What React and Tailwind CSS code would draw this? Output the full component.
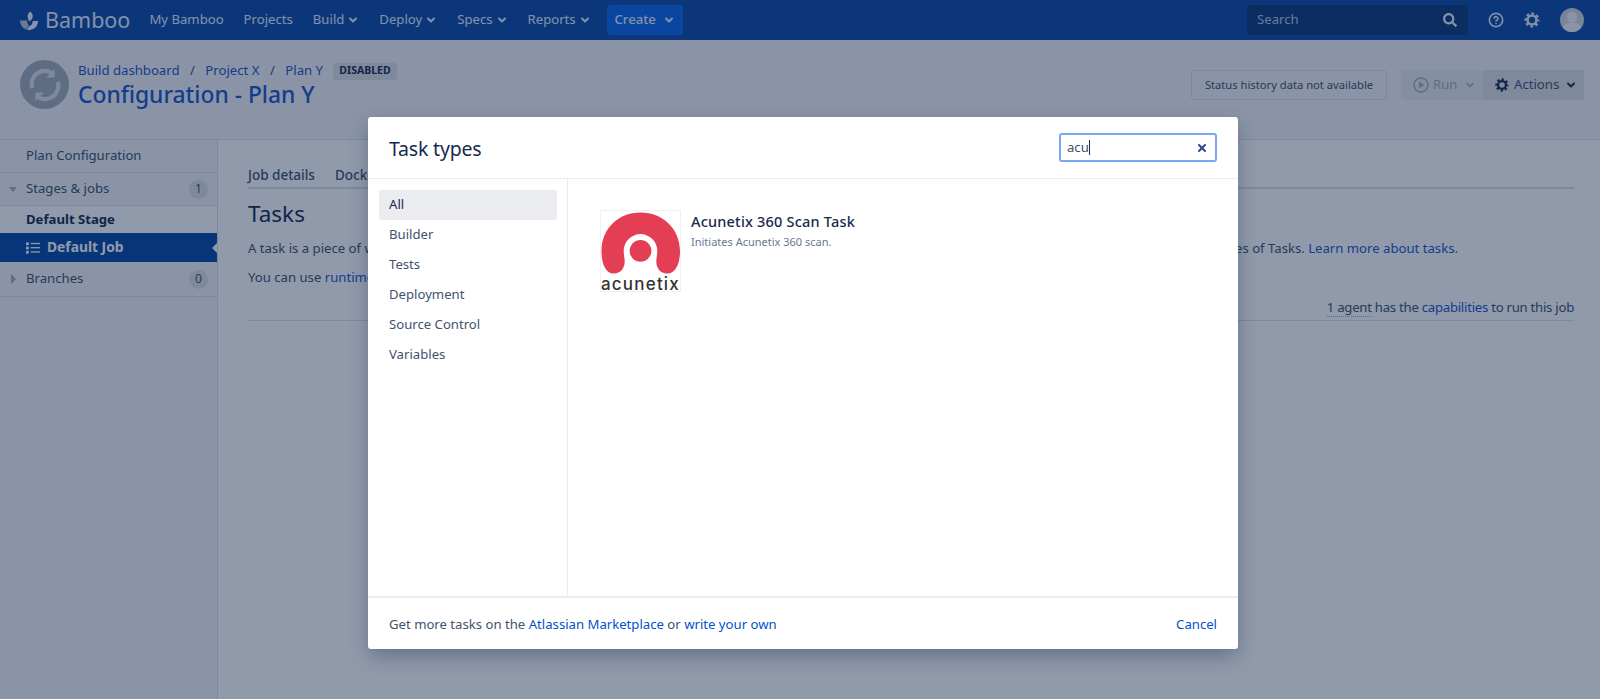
import { ChevronDown, CircleHelp, X } from "lucide-react";
import { FaSearch } from "react-icons/fa";

const navItems = [
  { label: "My Bamboo" },
  { label: "Projects" },
  { label: "Build", menu: true },
  { label: "Deploy", menu: true },
  { label: "Specs", menu: true },
  { label: "Reports", menu: true },
];

const taskTypes = ["All", "Builder", "Tests", "Deployment", "Source Control", "Variables"];

const BambooLogo = () => (
  <svg viewBox="0 0 18 19" className="w-[18px] h-[19px] shrink-0">
    <path d="M10 0.5 C13 2.5 13.5 6 11.5 8.5 L9.5 10.5 C7 7.5 7 3 10 0.5Z" fill="#eef3ff" />
    <path d="M0 9.5 H7 C7 12 8 14 9 15 L5.5 18.3 C2 16.8 0 13.5 0 9.5Z" fill="#b9c6e0" />
    <path d="M18 10 C18 15 14 19 9 19 C8 19 7 18.8 6.3 18.6 L9.7 15 C11.5 14.5 12.7 12.5 12.7 10Z" fill="#eef3ff" />
  </svg>
);

const Gear = ({ className }) => (
  <svg viewBox="0 0 16 16" className={className} fill="none" stroke="currentColor">
    <circle cx="8" cy="8" r="4.5" strokeWidth="2.6" />
    <circle cx="8" cy="8" r="6.5" strokeWidth="2.2" strokeDasharray="2.55 2.55" strokeDashoffset="1.27" />
  </svg>
);

const PlayIcon = () => (
  <svg viewBox="0 0 16 16" className="w-[16px] h-[16px]">
    <circle cx="8" cy="8" r="7" fill="none" stroke="currentColor" strokeWidth="1.5" />
    <path d="M6 4.5 L11.5 8 L6 11.5Z" fill="currentColor" />
  </svg>
);

const AcunetixLogo = () => (
  <div className="w-[81px] h-[82px] shrink-0 border border-[#f0f0f0] flex flex-col items-center">
    <svg viewBox="0 1 80 64" className="w-[79px] h-[64px] shrink-0">
      <path
        d="M0.5 41 C0.5 18 18 2 40 2 C62 2 80 18 80 41 C80 55 75 64 67 64 C60 64 56 58 56 52 C56 48 57 45 57 41 A17 17 0 0 0 23 41 C23 45 24 48 24 52 C24 58 20 64 13 64 C5 64 0.5 55 0.5 41Z"
        fill="#e33e54"
      />
      <circle cx="40" cy="41" r="11" fill="#e33e54" />
    </svg>
    <span className="font-['Inter',sans-serif] text-[17px] leading-[16px] font-medium tracking-[1.2px] mt-[1px] text-[#333333] whitespace-nowrap">
      acunetix
    </span>
  </div>
);

const SideRow = ({ children, badge, arrow, height }) => (
  <div className={`${height} border-b border-[#dfe1e6] flex items-center pl-[26px] pr-[9px] relative text-[#42526e]`}>
    {arrow === "down" && (
      <span className="absolute left-[9px] top-[14px] border-x-[4px] border-x-transparent border-t-[5px] border-t-[#a5adba]" />
    )}
    {arrow === "right" && (
      <span className="absolute left-[11px] top-[12px] border-y-[5px] border-y-transparent border-l-[5px] border-l-[#a5adba]" />
    )}
    <span className="flex-1">{children}</span>
    {badge && (
      <span className="w-[19px] h-[19px] rounded-full bg-[#dfe1e6] text-[12px] flex items-center justify-center">
        {badge}
      </span>
    )}
  </div>
);

export default function App() {
  return (
    <div className="relative h-[699px] overflow-hidden bg-white font-['Noto_Sans',sans-serif] text-[13.15px] text-[#172b4d]">
      {/* top nav */}
      <header className="h-[40px] bg-[#0d4aa8] flex items-center pl-[20px] pr-[16px] text-[#e6eeff]">
        <div className="flex items-center gap-[7px] mr-[19px]">
          <BambooLogo />
          <span className="text-[21.5px] leading-none text-[#e6eeff]">Bamboo</span>
        </div>
        <nav className="flex items-center gap-[20px]">
          {navItems.map((item) => (
            <span key={item.label} className="flex items-center gap-[3px]">
              {item.label}
              {item.menu && <ChevronDown size={12} strokeWidth={4} />}
            </span>
          ))}
        </nav>
        <button className="ml-[16px] h-[30px] w-[76px] rounded-[3px] bg-[#0b66ec] flex items-center justify-center gap-[7px] font-medium">
          Create <ChevronDown size={12} strokeWidth={4} />
        </button>
        <div className="ml-auto flex items-center">
          <div className="w-[221px] h-[30px] rounded-[3px] bg-[#10397d] flex items-center justify-between pl-[10px] pr-[11px] text-[#b3c6e8]">
            <span>Search</span>
            <FaSearch size={14} className="text-[#e6eeff]" />
          </div>
          <CircleHelp size={16} strokeWidth={2.4} className="ml-[20px]" />
          <Gear className="ml-[20px] w-[16px] h-[16px]" />
          <div className="ml-[20px] w-[24px] h-[24px] rounded-full bg-[#d5d8de] relative overflow-hidden">
            <span className="absolute left-[7px] top-[4px] w-[10px] h-[11px] rounded-full bg-[#f4f5f7]" />
            <span className="absolute left-[3px] top-[15px] w-[18px] h-[12px] rounded-full bg-[#f4f5f7]" />
          </div>
        </div>
      </header>

      {/* plan header */}
      <section className="h-[100px] bg-[#f4f5f7] border-b border-[#dfe1e6] flex items-start pl-[20px] pr-[16px] pt-[20px]">
        <div className="w-[49px] h-[49px] rounded-full bg-[#a5adba] flex items-center justify-center">
          <svg viewBox="0 0 32 32" className="w-[34px] h-[34px]" fill="none" stroke="#dfe1e6" strokeWidth="4">
            <path d="M4 19 A12.5 12.5 0 0 1 23 5" />
            <path d="M28 13 A12.5 12.5 0 0 1 9 27" />
            <path d="M25 1 L25 9 L17 9Z" fill="#dfe1e6" strokeWidth="0" />
            <path d="M7 31 L7 23 L15 23Z" fill="#dfe1e6" strokeWidth="0" />
          </svg>
        </div>
        <div className="ml-[9px] pt-[1px]">
          <div className="flex items-center h-[20px] text-[#1a56c8]">
            <span>Build dashboard</span>
            <span className="mx-[10.5px] text-[#42526e]">/</span>
            <span>Project X</span>
            <span className="mx-[10.5px] text-[#42526e]">/</span>
            <span>Plan Y</span>
            <span className="ml-[10px] h-[17px] w-[64px] rounded-[3px] bg-[#dfe1e6] text-[#172b4d] text-[10.5px] font-bold flex items-center justify-center">
              DISABLED
            </span>
          </div>
          <h1 className="text-[#1a56c8] text-[22.8px] leading-[29px] mt-[-1px] font-medium">Configuration - Plan Y</h1>
        </div>
        <div className="ml-auto flex items-center mt-[10px]">
          <div className="h-[30px] w-[196px] border border-[#dfe1e6] rounded-[3px] bg-[#f4f5f7] flex items-center justify-center text-[11.2px] text-[#42526e]">
            Status history data not available
          </div>
          <div className="ml-[14px] h-[30px] w-[82px] rounded-l-[3px] bg-[#ebecf0] flex items-center pl-[12px] gap-[4px] text-[#a5adba]">
            <PlayIcon />
            <span>Run</span>
            <ChevronDown size={12} strokeWidth={3.5} className="ml-[3px]" />
          </div>
          <div className="h-[30px] w-[101px] rounded-r-[3px] bg-[#dfe1e6] flex items-center pl-[12px] gap-[5px] text-[#42526e]">
            <Gear className="w-[14px] h-[14px] text-[#172b4d]" />
            <span>Actions</span>
            <ChevronDown size={12} strokeWidth={4} className="ml-[1px] text-[#172b4d]" />
          </div>
        </div>
      </section>

      <div className="flex h-[559px]">
        {/* sidebar */}
        <aside className="w-[218px] shrink-0 bg-[#f4f5f7] border-r border-[#dfe1e6]">
          <SideRow height="h-[33px]">Plan Configuration</SideRow>
          <SideRow height="h-[33px]" arrow="down" badge="1">Stages &amp; jobs</SideRow>
          <div className="h-[27px] bg-white pl-[26px] flex items-center font-bold">Default Stage</div>
          <div className="h-[29px] bg-[#0747a6] text-white pl-[26px] flex items-center font-bold text-[13.8px] relative">
            <svg viewBox="0 0 15 12" className="w-[14px] h-[12px] mr-[7px]" fill="white">
              <rect x="0" y="0" width="3" height="3" />
              <rect x="0" y="4.5" width="3" height="3" />
              <rect x="0" y="9" width="3" height="3" />
              <rect x="5" y="0.5" width="10" height="1.4" />
              <rect x="5" y="5" width="10" height="1.4" />
              <rect x="5" y="9.5" width="10" height="1.4" />
            </svg>
            Default Job
            <span className="absolute right-0 top-[10px] border-y-[5px] border-y-transparent border-r-[5px] border-r-white" />
          </div>
          <SideRow height="h-[35px]" arrow="right" badge="0">Branches</SideRow>
        </aside>

        {/* main */}
        <main className="flex-1 pl-[30px] pr-[26px] pt-[25px] bg-white">
          <div className="h-[24px] border-b-2 border-[#dfe1e6] flex gap-[20px] text-[#42526e] text-[13.5px] font-medium leading-[20px]">
            <span>Job details</span>
            <span>Docker</span>
          </div>
          <h2 className="text-[22.5px] leading-[30px] mt-[10px]">Tasks</h2>
          <div className="flex justify-between mt-[10px] text-[#42526e] leading-[18px] pr-[116px]">
            <span>A task is a piece of work</span>
            <span>
              es of Tasks. <span className="text-[#1a56c8]">Learn more about tasks.</span>
            </span>
          </div>
          <div className="mt-[11px] text-[#42526e] leading-[18px]">
            You can use <span className="text-[#1a56c8]">runtime</span>
          </div>
          <div className="h-[35px] border-b border-[#dfe1e6] flex items-start justify-end pt-[12px] text-[#42526e] leading-[18px] tracking-[-0.25px]">
            <span>
              <span className="border-b border-dotted border-[#a5adba]">1 agent</span> has the{" "}
              <span className="text-[#1a56c8]">capabilities</span> to run this job
            </span>
          </div>
        </main>
      </div>

      {/* blanket */}
      <div className="absolute inset-0 bg-[#091e42]/45" />

      {/* dialog */}
      <div className="absolute left-[368px] top-[117px] w-[870px] h-[532px] bg-white rounded-[3px] shadow-[0_8px_20px_-2px_rgba(9,30,66,0.35)] flex flex-col">
        <div className="h-[62px] shrink-0 border-b border-[#ebecf0] flex items-center justify-between px-[21px]">
          <h3 className="text-[19.5px] tracking-[-0.2px] pt-[3px]">Task types</h3>
          <div className="w-[158px] h-[29px] border-2 border-[#7aa7f5] rounded-[3px] flex items-center justify-between pl-[6px] pr-[7px] text-[#42526e]">
            <span className="border-r border-[#172b4d] leading-[15px]">acu</span>
            <X size={12} strokeWidth={4} className="text-[#2a4a80]" />
          </div>
        </div>
        <div className="flex-1 flex min-h-0">
          <div className="w-[200px] shrink-0 border-r border-[#ebecf0] pt-[11px] pl-[11px] pr-[10px]">
            {taskTypes.map((t) => (
              <div
                key={t}
                className={`h-[30px] px-[10px] flex items-center rounded-[3px] ${
                  t === "All" ? "bg-[#ebecf0] text-[#172b4d]" : "text-[#42526e]"
                }`}
              >
                {t}
              </div>
            ))}
          </div>
          <div className="flex-1 flex items-start pl-[32px] pt-[31px] gap-[10px]">
            <AcunetixLogo />
            <div>
              <div className="text-[14.5px] leading-[20px] font-medium tracking-[0.2px] mt-[1px]">Acunetix 360 Scan Task</div>
              <div className="text-[11px] leading-[14px] mt-[4px] text-[#6b778c]">Initiates Acunetix 360 scan.</div>
            </div>
          </div>
        </div>
        <div className="h-[53px] shrink-0 border-t-2 border-[#ebecf0] flex items-center justify-between px-[21px] pt-[2px] text-[#42526e]">
          <span>
            Get more tasks on the <span className="text-[#0052cc]">Atlassian Marketplace</span> or{" "}
            <span className="text-[#0052cc]">write your own</span>
          </span>
          <span className="text-[#0052cc]">Cancel</span>
        </div>
      </div>
    </div>
  );
}
